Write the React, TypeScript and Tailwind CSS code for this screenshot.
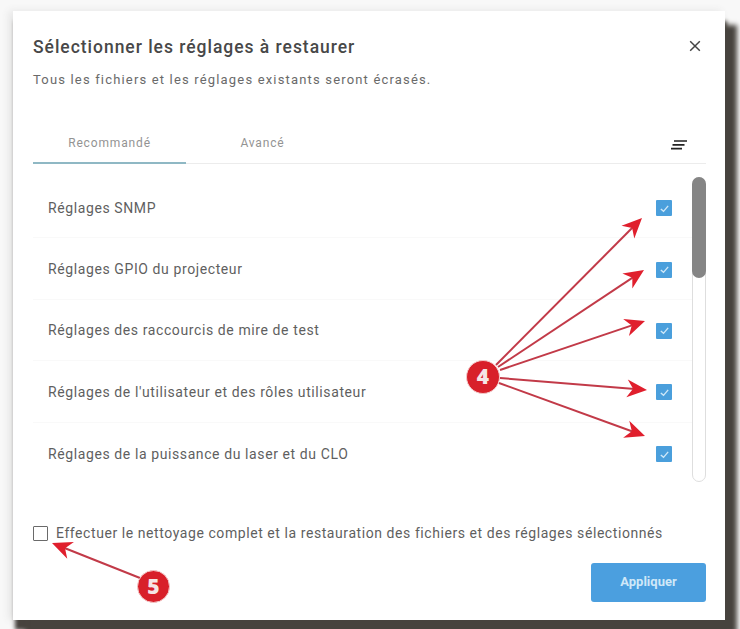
const rows = [
  "Réglages SNMP",
  "Réglages GPIO du projecteur",
  "Réglages des raccourcis de mire de test",
  "Réglages de l'utilisateur et des rôles utilisateur",
  "Réglages de la puissance du laser et du CLO",
];

const arrows = [
  { x1: 496, y1: 365, x2: 642, y2: 218 },
  { x1: 498, y1: 367, x2: 644, y2: 270 },
  { x1: 500, y1: 370, x2: 645, y2: 321 },
  { x1: 500, y1: 378, x2: 647, y2: 390 },
  { x1: 499, y1: 383, x2: 645, y2: 436 },
  { x1: 140, y1: 578, x2: 52, y2: 543 },
];

const arrowHead = (a: { x1: number; y1: number; x2: number; y2: number }) => {
  const angle = Math.atan2(a.y2 - a.y1, a.x2 - a.x1);
  const len = 20;
  const wing = 9;
  const notch = 14;
  const bx = a.x2 - len * Math.cos(angle);
  const by = a.y2 - len * Math.sin(angle);
  const nx = a.x2 - notch * Math.cos(angle);
  const ny = a.y2 - notch * Math.sin(angle);
  const px = -Math.sin(angle) * wing;
  const py = Math.cos(angle) * wing;
  return `${a.x2},${a.y2} ${bx + px},${by + py} ${nx},${ny} ${bx - px},${by - py}`;
};

const CheckBox = () => (
  <div className="flex h-[16px] w-[16px] items-center justify-center rounded-[1px] bg-[#4a9fdc]">
    <svg viewBox="0 0 16 16" className="h-[13px] w-[13px]" fill="none">
      <path d="M3.5 8.5 L6.8 11.5 L12.5 4.8" stroke="#cfe8f8" strokeWidth="1.7" />
    </svg>
  </div>
);

const Badge = ({ label, className }: { label: string; className: string }) => (
  <div
    className={`absolute flex items-center justify-center rounded-full border border-[#f3c9c9] bg-[#d8202a] font-['Open_Sans',sans-serif] text-[21px] font-extrabold text-[#f5e6e6] ${className}`}
  >
    {label}
  </div>
);

const App = () => {
  return (
    <div className="relative h-[629px] w-[740px] overflow-hidden bg-[#f8f8f8] pl-[13px] pt-[11px] font-['Roboto',sans-serif]">
      <div className="flex h-[609px] w-[712px] flex-col bg-white pl-5 pr-[19px] pt-[25px] shadow-[12px_14px_5px_#47433e,2px_10px_4px_#47433e,-4px_0_8px_#e4e4e4]">
        <div className="flex items-center justify-between">
          <h1 className="text-[17.5px] font-medium leading-[22px] tracking-[0.97px] text-[#484848]">
            Sélectionner les réglages à restaurer
          </h1>
          <svg viewBox="0 0 16 16" className="mr-[4px] -mt-[2px] h-[14px] w-[14px]" fill="none">
            <path d="M2.5 2.5 L13.5 13.5 M13.5 2.5 L2.5 13.5" stroke="#444" strokeWidth="1.7" />
          </svg>
        </div>
        <p className="mt-[13px] text-[13px] leading-[18px] tracking-[1.17px] text-[#6a6a6a]">
          Tous les fichiers et les réglages existants seront écrasés.
        </p>

        <div className="mt-[35px] flex h-[40px] items-start border-b border-[#ececec]">
          <div className="relative h-[40px] w-[153px] border-b-2 border-[#8fb8c4] pt-[12px] text-center text-[12px] leading-[14px] tracking-[0.85px] text-[#939393]">
            Recommandé
          </div>
          <div className="w-[153px] pt-[12px] text-center text-[12px] leading-[14px] tracking-[0.85px] text-[#939393]">
            Avancé
          </div>
          <svg viewBox="0 0 18 10" className="ml-auto mr-[18px] mt-[16px] h-[10px] w-[18px]" fill="none">
            <path d="M4 1 H17 M2.5 4.8 H14.5 M1 8.6 H12" stroke="#222" strokeWidth="1.7" />
          </svg>
        </div>

        <div className="mt-[13px] flex h-[305px]">
          <div className="flex-1">
            {rows.map((row, i) => (
              <div
                key={row}
                className={`flex h-[61.4px] items-center pl-[15px] pr-[20px] ${i < 4 ? "border-b border-[#f9f9f9]" : ""}`}
              >
                <span className="mt-[1px] text-[14px] leading-[18px] tracking-[0.6px] text-[#5f5f5f]">{row}</span>
                <div className="ml-auto mt-[2px]">
                  <CheckBox />
                </div>
              </div>
            ))}
          </div>
          <div className="h-[305px] w-[14px] rounded-[7px] border border-[#dedede]">
            <div className="-m-px h-[101px] w-[14px] rounded-[7px] bg-[#858585]" />
          </div>
        </div>

        <div className="mt-[42px] flex items-center gap-[8px]">
          <div className="h-[15px] w-[15px] rounded-[1px] border-[1.5px] border-[#6a6a6a]" />
          <span className="text-[14px] leading-[18px] tracking-[0.57px] text-[#5f5f5f]">
            Effectuer le nettoyage complet et la restauration des fichiers et des réglages sélectionnés
          </span>
        </div>

        <div className="mt-[21px] flex justify-end">
          <button
            type="button"
            className="h-[39px] w-[115px] rounded-[3px] bg-[#4b9fdf] pb-[2px] text-[13px] font-bold text-[#cfe8f8]"
          >
            Appliquer
          </button>
        </div>
      </div>

      <svg viewBox="0 0 740 629" className="pointer-events-none absolute left-0 top-0 h-[629px] w-[740px]" fill="none">
        {arrows.map((a) => {
          const angle = Math.atan2(a.y2 - a.y1, a.x2 - a.x1);
          return (
            <g key={a.x2}>
              <line x1={a.x1} y1={a.y1} x2={a.x2 - 6 * Math.cos(angle)} y2={a.y2 - 6 * Math.sin(angle)} stroke="#c23a48" strokeWidth="2" />
              <polygon points={arrowHead(a)} fill="#e01f2d" />
            </g>
          );
        })}
      </svg>
      <Badge label="4" className="left-[466px] top-[360px] h-[34px] w-[34px]" />
      <Badge label="5" className="left-[137px] top-[570px] h-[33px] w-[33px]" />
    </div>
  );
};

export default App;
